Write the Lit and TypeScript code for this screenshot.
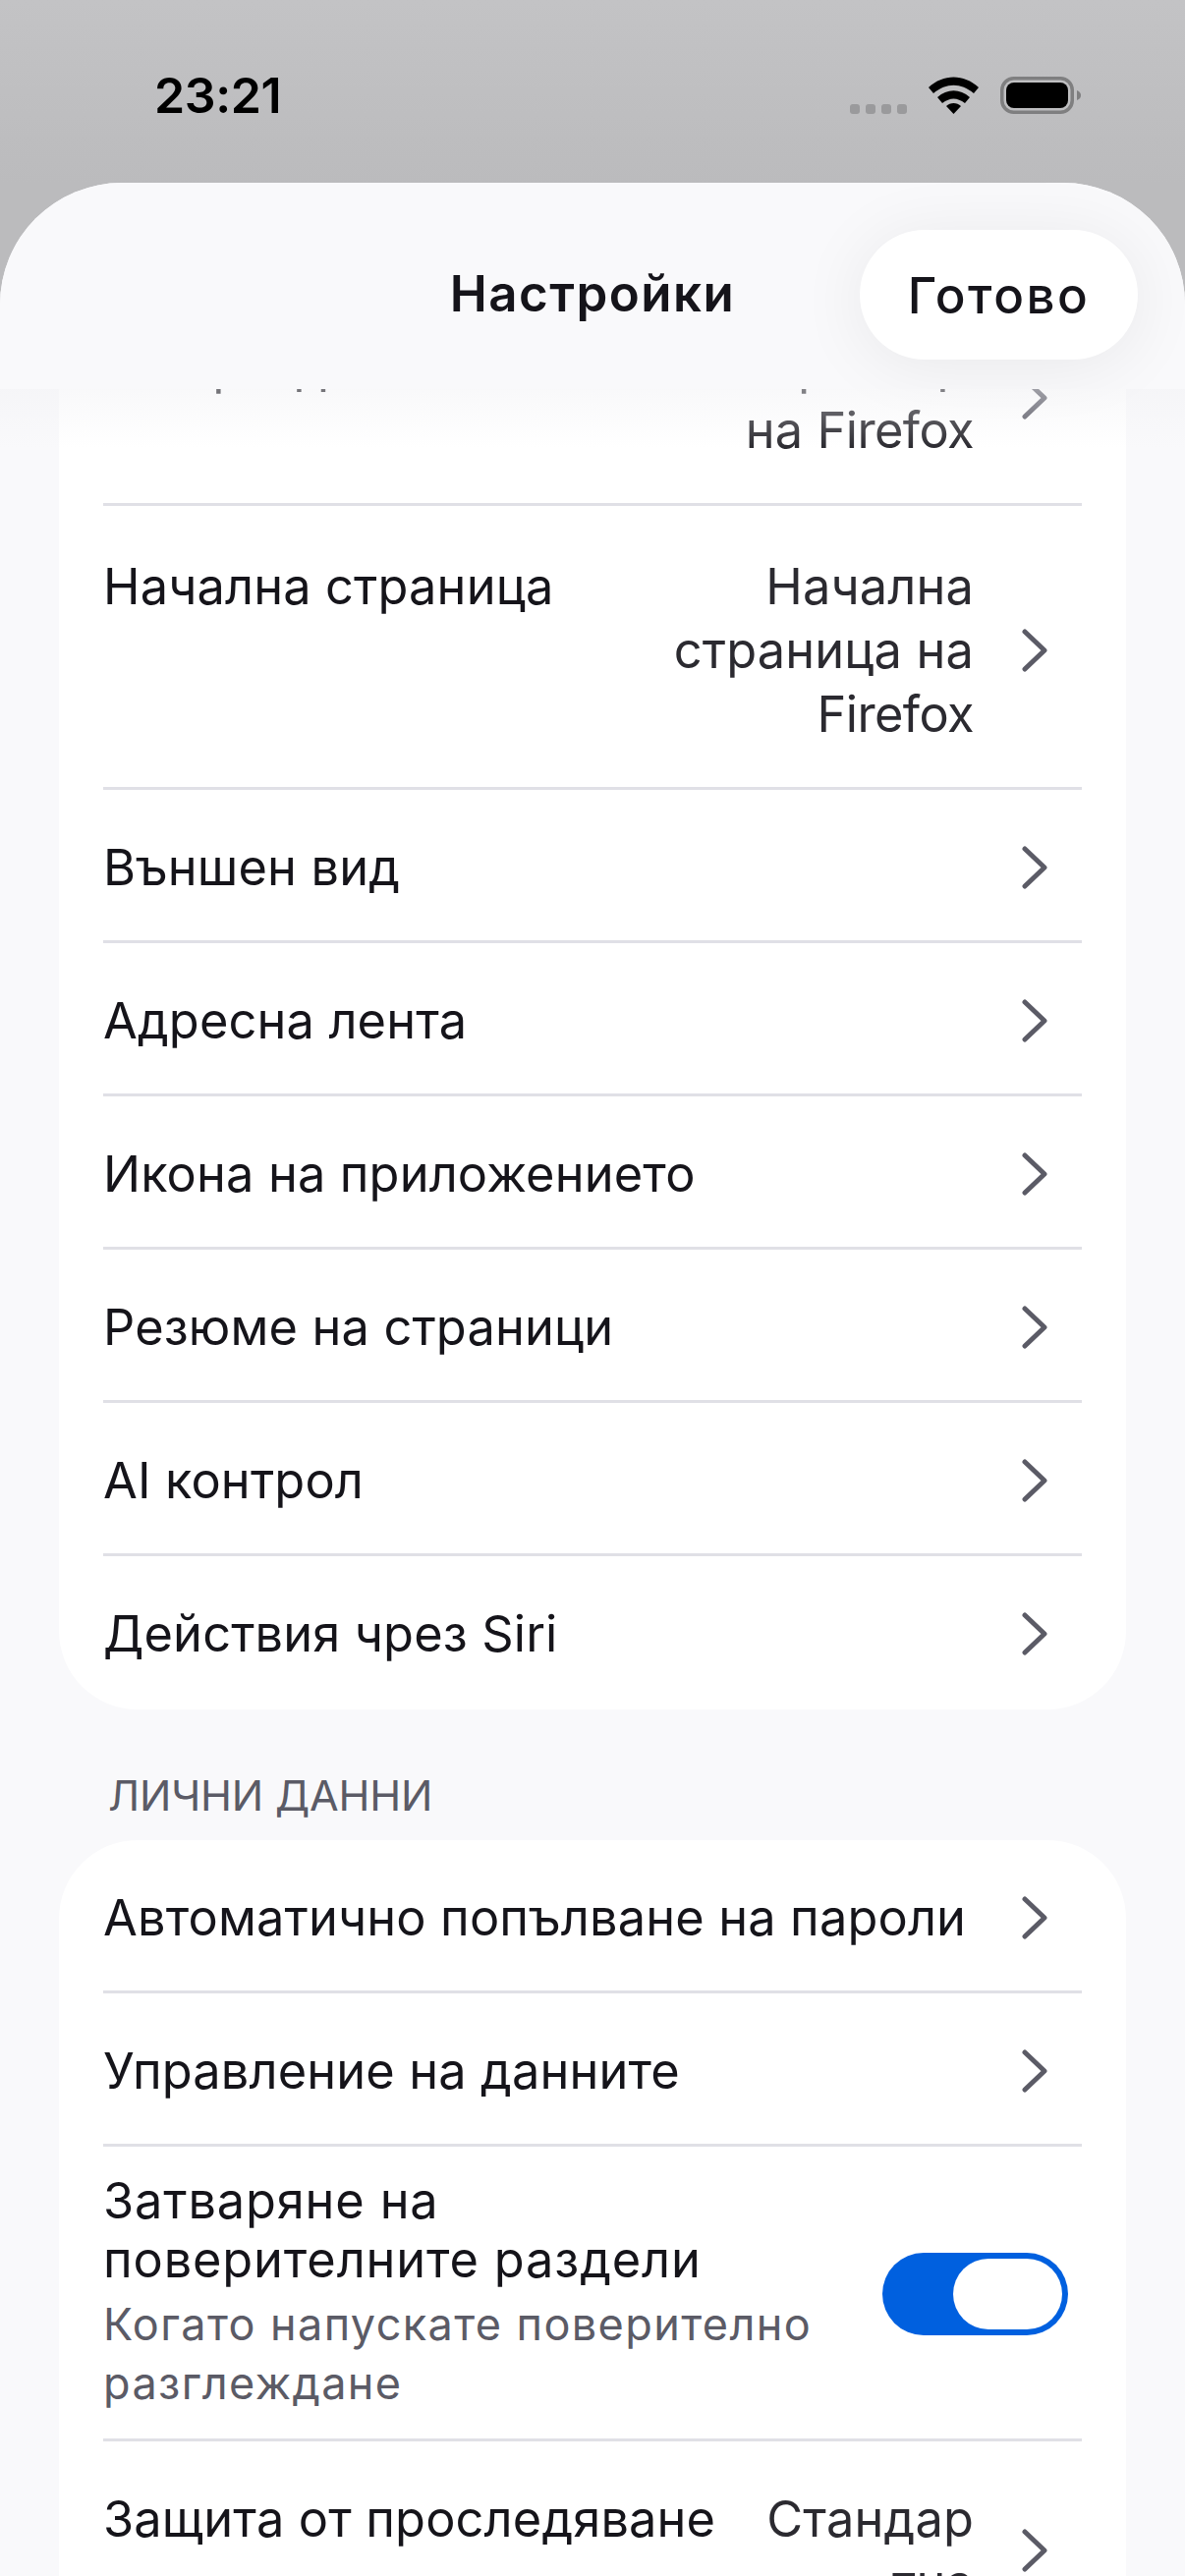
import { LitElement, html, css, TemplateResult } from "lit";
import { customElement } from "lit/decorators.js";

type Row = { label: string; value?: (string | TemplateResult)[]; tall?: boolean };

const CHEVRON = html`<svg class="chev" viewBox="0 0 26 44" aria-hidden="true"><path d="M3 3 L23 22 L3 41" fill="none" stroke="currentColor" stroke-width="5" stroke-linecap="round" stroke-linejoin="round"/></svg>`;
const FIREFOX = html`<span class="latin">Firefox</span>`;

@customElement("app-root")
export class AppRoot extends LitElement {
  static styles = css`
    :host { display: block; width: 1206px; height: 2622px; overflow: hidden; position: relative;
      background: linear-gradient(#c3c3c5, #bbbbbd 186px, #bbbbbd);
      font-family: Inter, "Liberation Sans", sans-serif; color: #15141a; }
    .status { height: 186px; box-sizing: border-box; padding: 78px 106px 0 157px; display: flex; align-items: flex-start; }
    .time { font-size: 50px; font-weight: 600; line-height: 38px; color: #000; letter-spacing: -.4px; flex: 1; }
    .dots { display: flex; gap: 6px; margin: 28px 22px 0 0; }
    .dots i { width: 10px; height: 10px; border-radius: 3px; background: #9a9a9c; }
    .wifi { width: 51px; height: 38px; margin-right: 22px; }
    .battery { width: 82px; height: 38px; }
    .sheet { position: relative; height: 2436px; overflow: hidden; background: #f9f9fb; border-radius: 124px 124px 0 0; }
    .header { position: absolute; left: 0; right: 0; top: 0; height: 210px; background: #f9f9fb; z-index: 2; display: flex; align-items: center; justify-content: center; }
    .header::after { content: ""; position: absolute; left: 0; right: 0; top: 100%; height: 60px; background: linear-gradient(rgba(241,241,244,.45), rgba(249,249,251,0)); }
    .title { font-size: 51px; font-weight: 600; letter-spacing: 1.5px; margin-top: 15px; }
    .done { position: absolute; right: 48px; top: 48px; width: 283px; height: 132px; border-radius: 66px; background: #fff; box-shadow: 0 6px 70px rgba(0,0,0,.07); display: flex; align-items: center; justify-content: center; font-size: 51px; font-weight: 500; letter-spacing: 2.5px; }
    .content { padding: 105px 60px 0; }
    .card { background: #fff; border-radius: 80px; overflow: hidden; }
    .card.first { border-radius: 0 0 80px 80px; }
    .row { display: flex; align-items: flex-start; margin: 0 45px; padding: 46px 0 42px; border-bottom: 3px solid #e0e0e6; }
    .row.tall { padding-top: 49px; }
    .row.end { border-bottom-color: transparent; }
    .label { flex: 1 1 auto; font-size: 50.5px; line-height: 65px; letter-spacing: .15px; white-space: nowrap; }
    .value { flex: none; text-align: right; font-size: 50.5px; line-height: 65px; letter-spacing: .15px; color: #2b2a30; margin-left: 27px; }
    .latin { letter-spacing: -.6px; }
    .chev { flex: none; align-self: center; width: 26px; height: 44px; margin: 0 35px 0 49px; color: #5b5b66; }
    .section { margin: 59px 45px 18px 50px; font-size: 43px; line-height: 56px; color: #5b5b66; letter-spacing: -.2px; }
    .sub { font-size: 45px; line-height: 60px; margin-top: 6px; color: #5b5b66; letter-spacing: 1.4px; }
    .stack { flex: 1; min-width: 0; }
    .stack .label { line-height: 60px; letter-spacing: .85px; white-space: normal; }
    .toggle { flex: none; align-self: center; box-sizing: border-box; width: 189px; height: 84px; padding: 6px; margin: 4px 14px 0 0; border-radius: 42px; background: #0060df; display: flex; justify-content: flex-end; }
    .toggle i { width: 111px; height: 72px; border-radius: 36px; background: #fff; }
    .row.toggle-row { padding: 25px 0 26px; }
  `;

  private row(r: Row, end = false) {
    return html`<div class="row ${r.tall ? "tall" : ""} ${end ? "end" : ""}">
      <div class="label">${r.label}</div>
      ${r.value ? html`<div class="value">${r.value.map((l, i) => html`${i ? html`<br />` : ""}${l}`)}</div>` : ""}
      ${CHEVRON}
    </div>`;
  }

  render() {
    const a: Row[] = [
      { label: "Нов раздел", value: ["Начална страница", html`на ${FIREFOX}`], tall: true },
      { label: "Начална страница", value: ["Начална", "страница на", FIREFOX], tall: true },
      { label: "Външен вид" },
      { label: "Адресна лента" },
      { label: "Икона на приложението" },
      { label: "Резюме на страници" },
      { label: "AI контрол" },
      { label: "Действия чрез Siri" },
    ];
    const b: Row[] = [
      { label: "Автоматично попълване на пароли" },
      { label: "Управление на данните" },
    ];
    return html`<div lang="bg">
      <div class="status">
        <div class="time">23:21</div>
        <div class="dots"><i></i><i></i><i></i><i></i></div>
        <svg class="wifi" viewBox="0 0 51 38"><path d="M0 11 C15 -3 36 -3 51 11 L46 17 C33 6 18 6 5 17 Z M9 21 C19 12 32 12 42 21 L37 27 C29 21 22 21 14 27 Z M18 30 C22 26 29 26 33 30 L25.5 38 Z" fill="#000"/></svg>
        <svg class="battery" viewBox="0 0 82 38"><rect x="1.75" y="1.75" width="71.5" height="34.5" rx="12" fill="none" stroke="#7f7f80" stroke-width="3.5"/><rect x="6" y="6" width="63" height="26" rx="8" fill="#000"/><path d="M78 14 C81 15 82 17 82 19 C82 21 81 23 78 24 Z" fill="#7f7f80"/></svg>
      </div>
      <div class="sheet">
        <div class="header">
          <div class="title">Настройки</div>
          <div class="done">Готово</div>
        </div>
        <div class="content">
          <div class="card first">${a.map((r, i) => this.row(r, i === a.length - 1))}</div>
          <div class="section">ЛИЧНИ ДАННИ</div>
          <div class="card">
            ${b.map((r) => this.row(r))}
            <div class="row toggle-row">
              <div class="stack">
                <div class="label">Затваряне на<br />поверителните раздели</div>
                <div class="sub">Когато напускате поверително<br />разглеждане</div>
              </div>
              <div class="toggle"><i></i></div>
            </div>
            ${this.row({ label: "Защита от проследяване", value: ["Стандар", "тна"] }, true)}
          </div>
        </div>
      </div>
    </div>`;
  }
}
